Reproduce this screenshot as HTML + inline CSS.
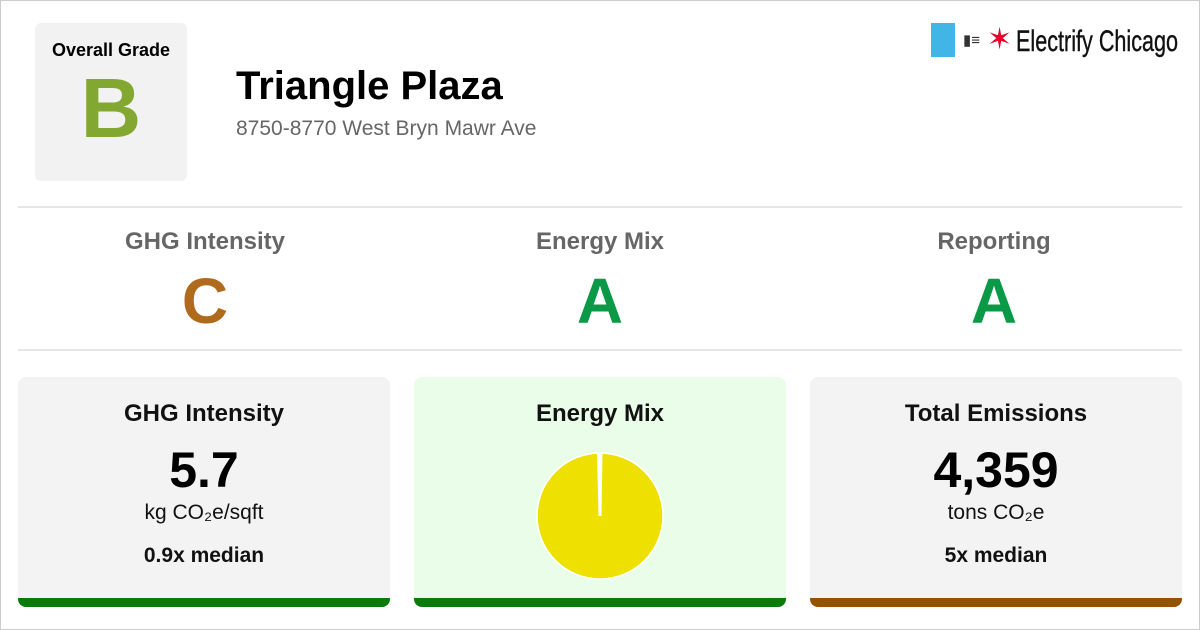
<!DOCTYPE html><html><head><style>
body{margin:0;width:1200px;height:630px;background:#fff;font-family:"Liberation Sans",sans-serif;position:relative;overflow:hidden}
.frame{position:absolute;left:0;top:0;width:1198px;height:628px;border:1px solid #ccc}
.a{position:absolute}
.og{left:35px;top:23px;width:152px;height:158px;background:#f2f2f2;border-radius:6px;text-align:center}
.hr{left:18px;width:1164px;height:2px;background:#e6e6e6}
.lbl{width:300px;text-align:center;font-weight:bold;font-size:24px;color:#666}
.gr{width:300px;text-align:center;font-weight:bold;font-size:64px}
.card{top:377px;width:372px;height:230px;background:#f3f3f3;border-radius:8px;overflow:hidden;text-align:center}
.card div{position:absolute;left:0;width:100%}
.card .t{font-weight:bold;font-size:24px;top:22px;line-height:30px;color:#111}
.card .bar{left:0;bottom:0;width:100%;height:9px}
.big{font-weight:bold;font-size:50px;top:65px;line-height:56px}
.u{font-size:21px;top:124px;line-height:24px;color:#111}
.m{font-weight:bold;font-size:21px;top:167px;line-height:24px;color:#111}
</style></head><body><div class="frame"></div>
<div class="a og"><div style="font-weight:bold;font-size:18px;margin-top:17px">Overall Grade</div><div style="font-weight:bold;font-size:84px;color:#82a832;line-height:90px;margin-top:2px">B</div></div>
<div class="a" style="left:236px;top:64px;font-weight:bold;font-size:40px;color:#000">Triangle Plaza</div>
<div class="a" style="left:236px;top:117px;font-size:21px;color:#666">8750-8770 West Bryn Mawr Ave</div>
<div class="a" style="left:931px;top:23px;width:24px;height:34px;background:#41b6e6"></div>
<div class="a" style="left:963px;top:31px;font-size:15px;color:#333;white-space:nowrap">&#9646;&#8801;</div>
<div class="a" style="left:987px;top:22px;font-size:30px;color:#e4002b;line-height:36px">&#10038;</div>
<div class="a" style="left:1016px;top:24px;font-size:30px;line-height:36px;color:#111;white-space:nowrap;transform:scaleX(.72);transform-origin:left;-webkit-text-stroke:.4px #111">Electrify Chicago</div>
<div class="a hr" style="top:206px"></div>
<div class="a hr" style="top:349px"></div>
<div class="a lbl" style="left:55px;top:228px">GHG Intensity</div>
<div class="a lbl" style="left:450px;top:228px">Energy Mix</div>
<div class="a lbl" style="left:844px;top:228px">Reporting</div>
<div class="a gr" style="left:55px;top:264px;color:#b06a1c">C</div>
<div class="a gr" style="left:450px;top:264px;color:#0a9a47">A</div>
<div class="a gr" style="left:844px;top:264px;color:#0a9a47">A</div>
<div class="a card" style="left:18px"><div class="t">GHG Intensity</div><div class="big">5.7</div><div class="u">kg CO₂e/sqft</div><div class="m">0.9x median</div><div class="bar" style="background:#0a7a0a"></div></div>
<div class="a card" style="left:414px;background:#e9fde9"><div class="t">Energy Mix</div>
<svg class="a" style="left:120px;top:73px;position:absolute" width="132" height="132"><circle cx="66" cy="66" r="63" fill="#eee000" stroke="#fff" stroke-width="1.5"/><path d="M66 66 L64.5 3 M66 66 L67 3" stroke="#fff" stroke-width="3"/></svg>
<div class="bar" style="background:#0a7a0a"></div></div>
<div class="a card" style="left:810px"><div class="t">Total Emissions</div><div class="big">4,359</div><div class="u">tons CO₂e</div><div class="m">5x median</div><div class="bar" style="background:#945200"></div></div>
</body></html>
